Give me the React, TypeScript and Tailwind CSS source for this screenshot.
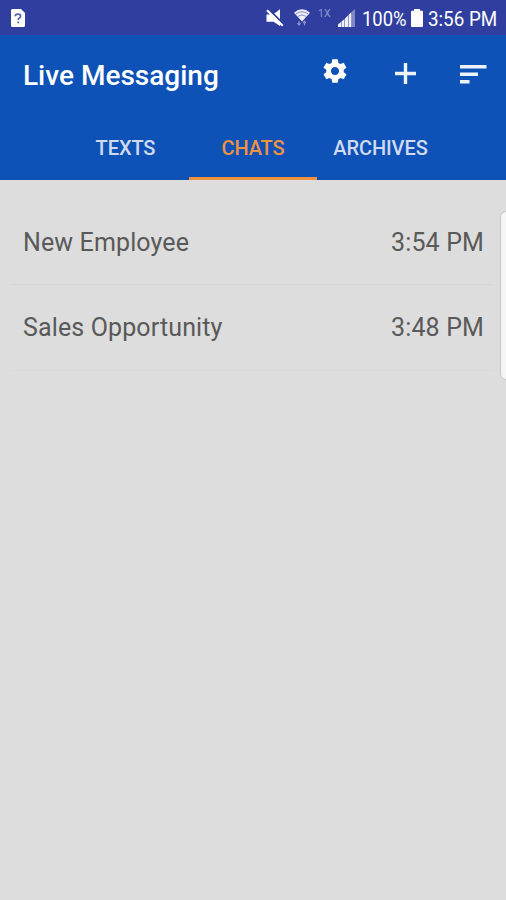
import { clsx } from 'clsx';

const TABS = [
  { label: 'TEXTS', className: 'w-[127px] tracking-[-0.1px]' },
  { label: 'CHATS', className: 'w-[128px] tracking-[-0.1px]' },
  { label: 'ARCHIVES', className: 'w-[127px] tracking-[-0.1px]' },
];

const CHATS = [
  { name: 'New Employee', time: '3:54 PM', className: 'h-[85px] border-[#d5d5d5]' },
  { name: 'Sales Opportunity', time: '3:48 PM', className: 'h-[86px] border-[#d9d9d9]' },
];

function UnknownFileIcon() {
  return (
    <svg width="14" height="18" viewBox="0 0 14 18">
      <path d="M1.5 0H10l4 4v12.500a1.500 1.500 0 0 1-1.500 1.500h-11A1.500 1.500 0 0 1 0 16.500v-15A1.500 1.500 0 0 1 1.500 0z" fill="#fff" />
      <path d="M4.300 7.200C4.300 4.500 9.600 4.500 9.600 7.200C9.600 9 7.200 8.800 7.200 11M7.200 12.400v1.800" fill="none" stroke="#5360a8" strokeWidth="1.700" />
    </svg>
  );
}

function MutedIcon() {
  return (
    <svg width="18" height="18" viewBox="0 0 18 18">
      <path d="M.5 5.500H7L14 .3V17L7.500 12.800h-7z" fill="#fff" />
      <path d="M2.500 0l15.500 15.500" stroke="#303f9f" strokeWidth="1.800" />
      <path d="M1 1.300l15.700 15.400" stroke="#fff" strokeWidth="2.200" />
    </svg>
  );
}

function WifiIcon() {
  return (
    <svg width="18" height="19" viewBox="0 0 18 19">
      <path d="M1 4.700Q9-2 17 4.700L9 13.500z" fill="#eeeff8" />
      <path d="M2.800 6Q9 1.500 15.200 6M5 8.300Q9 5.500 13 8.300" fill="none" stroke="#7780c0" strokeWidth=".9" />
      <path d="M6 13v4M4.500 15.200L6 17.200l1.500-2M11.500 17.500v-4M10 15.100l1.500-2 1.500 2" fill="none" stroke="#8c94cb" strokeWidth="1.100" />
    </svg>
  );
}

function SignalIcon() {
  return (
    <svg width="18" height="18" viewBox="0 0 18 18" fill="#eeeff8">
      <path d="M0 15.500L3 13v5H0zM3.500 12.500l3-2.500v8h-3zM7 9.500L10 6.500V18H7zM10.500 6l3-3v15h-3z" />
      <path d="M14 2.500L17 0v18h-3z" fill="#7f89c5" />
    </svg>
  );
}

function BatteryIcon() {
  return (
    <svg width="12" height="18" viewBox="0 0 12 18" fill="#fff">
      <path d="M3 0h6v1.800h2a1 1 0 0 1 1 1V17a1 1 0 0 1-1 1H1a1 1 0 0 1-1-1V2.800a1 1 0 0 1 1-1h2z" />
    </svg>
  );
}

function GearIcon() {
  return (
    <svg width="28" height="28" viewBox="0 0 24 24" fill="currentColor">
      <path d="M19.430 12.980c.04-.32.07-.64.07-.98s-.03-.66-.07-.98l2.110-1.650c.19-.15.24-.42.12-.64l-2-3.460c-.12-.22-.39-.3-.61-.22l-2.490 1c-.52-.4-1.080-.73-1.690-.98l-.38-2.650C14.460 2.180 14.250 2 14 2h-4c-.25 0-.46.18-.49.42l-.38 2.650c-.61.25-1.170.59-1.690.98l-2.490-1c-.23-.09-.49 0-.61.22l-2 3.460c-.13.22-.07.49.12.64l2.110 1.650c-.04.32-.07.65-.07.98s.03.66.07.98l-2.110 1.650c-.19.15-.24.42-.12.64l2 3.460c.12.22.39.3.61.22l2.490-1c.52.4 1.080.73 1.690.98l.38 2.650c.03.24.24.42.49.42h4c.25 0 .46-.18.49-.42l.38-2.650c.61-.25 1.170-.59 1.690-.98l2.490 1c.23.09.49 0 .61-.22l2-3.460c.12-.22.07-.49-.12-.64l-2.110-1.650zM12 15.500c-1.930 0-3.500-1.570-3.500-3.500s1.570-3.500 3.500-3.500 3.500 1.570 3.500 3.500-1.570 3.500-3.500 3.500z" />
    </svg>
  );
}

function AddIcon() {
  return (
    <svg width="21" height="21" viewBox="0 0 21 21" fill="#eef2fb">
      <path d="M8.800 0h3.400v8.800H21v3.400h-8.800V21H8.800v-8.800H0V8.800h8.800z" />
    </svg>
  );
}

function SortIcon() {
  return (
    <svg width="27" height="20" viewBox="0 0 27 20" fill="#eef2fb">
      <path d="M0 0h26.500v3.500H0zM0 7.500h18v3.500H0zM0 15h9.500v3.500H0z" />
    </svg>
  );
}

function StatusBar() {
  return (
    <div className="flex h-[35px] items-center bg-[#303f9f] pl-[11px] pr-2 text-white">
      <UnknownFileIcon />
      <div className="ml-auto flex items-center">
        <MutedIcon />
        <div className="ml-[9px]"><WifiIcon /></div>
        <span className="mb-[8px] ml-[7px] w-[14px] text-[10.5px] leading-3 text-[#8f97ce]">1X</span>
        <div className="ml-[6px]"><SignalIcon /></div>
        <span className="ml-[6px] mt-0.5 w-[45px] origin-left scale-x-[0.92] whitespace-nowrap text-[20px] leading-6">100%</span>
        <div className="ml-1"><BatteryIcon /></div>
        <span className="ml-[5px] mt-0.5 w-[70px] origin-left scale-x-[0.94] whitespace-nowrap text-[20px] leading-6">3:56 PM</span>
      </div>
    </div>
  );
}

function Header() {
  return (
    <header className="h-[145px] bg-[#0e52b8]">
      <div className="flex h-20 items-center pl-[23px] pr-[19px] text-white">
        <h1 className="pt-px text-[28px] font-medium leading-8">Live Messaging</h1>
        <button className="mb-2 ml-auto" aria-label="Settings"><GearIcon /></button>
        <button className="mb-[3px] ml-[46px]" aria-label="Add"><AddIcon /></button>
        <button className="mb-[1px] ml-[44px]" aria-label="Sort"><SortIcon /></button>
      </div>
      <nav className="flex h-[65px] justify-center">
        {TABS.map((tab) => (
          <button
            key={tab.label}
            className={clsx(
              'border-b-[3px] pt-1 text-[20px] font-medium leading-6',
              tab.className,
              tab.label === 'CHATS' ? 'border-[#ee923f] text-[#ee923f]' : 'border-transparent text-[#d0daf0]',
            )}
          >
            {tab.label}
          </button>
        ))}
      </nav>
    </header>
  );
}

export default function App() {
  return (
    <div className="relative h-[900px] w-[506px] overflow-hidden bg-[#dddddd] font-[Roboto,sans-serif]">
      <StatusBar />
      <Header />
      <main className="px-3 pt-5">
        {CHATS.map((chat) => (
          <div key={chat.name} className={clsx('flex items-center justify-between border-b pl-[11px] pr-[10px] pt-px text-[25px] leading-8 tracking-[0.13px] text-[#595959]', chat.className)}>
            <span>{chat.name}</span>
            <span>{chat.time}</span>
          </div>
        ))}
      </main>
      {/* edge panel handle */}
      <div className="absolute -right-2 top-[211px] h-[169px] w-[14px] rounded-md border border-[#c6c6c6] bg-[#f5f5f5]" />
    </div>
  );
}
